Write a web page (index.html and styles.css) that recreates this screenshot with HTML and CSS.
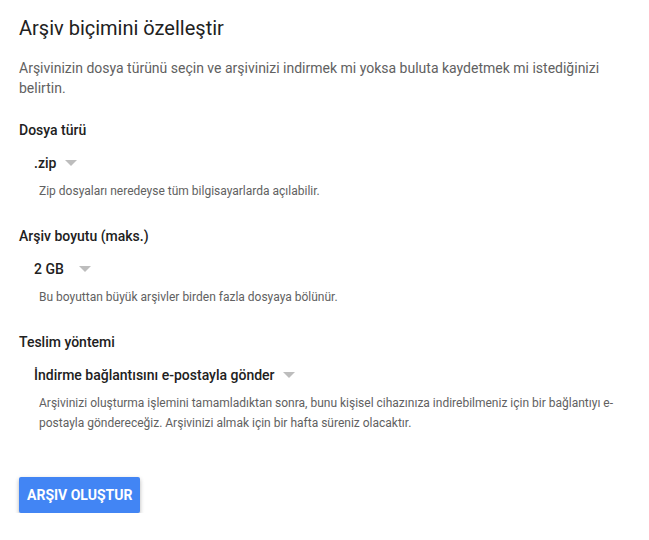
FILE: index.html
```html
<!DOCTYPE html>
<html>
  <head>
    <meta charset="UTF-8" />
    <title>Arşiv biçimi</title>
    <link rel="stylesheet" href="styles.css">
  </head>

  <body>
    <div class="page">
      <h1 class="title">Arşiv biçimini özelleştir</h1>
      <p class="intro">
        Arşivinizin dosya türünü seçin ve arşivinizi indirmek mi yoksa buluta kaydetmek mi istediğinizi belirtin.
      </p>

      <div class="option">
        <div class="option_label">Dosya türü</div>
        <div class="select">
          <span class="select_value">.zip</span>
          <span class="arrow arrow_zip"></span>
        </div>
        <div class="helper">Zip dosyaları neredeyse tüm bilgisayarlarda açılabilir.</div>
      </div>

      <div class="option">
        <div class="option_label">Arşiv boyutu (maks.)</div>
        <div class="select">
          <span class="select_value">2 GB</span>
          <span class="arrow arrow_size"></span>
        </div>
        <div class="helper">Bu boyuttan büyük arşivler birden fazla dosyaya bölünür.</div>
      </div>

      <div class="option">
        <div class="option_label">Teslim yöntemi</div>
        <div class="select">
          <span class="select_value">İndirme bağlantısını e-postayla gönder</span>
          <span class="arrow"></span>
        </div>
        <div class="helper">
          Arşivinizi oluşturma işlemini tamamladıktan sonra, bunu kişisel cihazınıza indirebilmeniz için bir bağlantıyı e-postayla göndereceğiz. Arşivinizi almak için bir hafta süreniz olacaktır.
        </div>
      </div>

      <button class="create_button">Arşiv oluştur</button>
    </div>
  </body>
</html>
```

FILE: styles.css
```css
body {
  margin: 0;
  background-color: #fff;
  font-family: Roboto, "Noto Sans", Arial, sans-serif;
  color: #212121;
}

.page {
  padding: 14px 19px 0 19px;
}

.title {
  margin: 0;
  font-size: 20px;
  font-weight: 400;
  line-height: 28px;
  color: #212121;
}

.intro {
  margin: 16px 0 0 0;
  font-size: 14px;
  line-height: 20px;
  color: #616161;
  max-width: 610px;
}

/* Option blocks */
.option {
  margin-top: 22px;
}
.option + .option {
  margin-top: 25px;
}
.option_label {
  font-size: 14px;
  font-weight: 500;
  line-height: 20px;
  color: #212121;
}
.select {
  display: flex;
  align-items: center;
  margin: 13px 0 0 15px;
  height: 20px;
}
.select_value {
  font-size: 14px;
  font-weight: 500;
  line-height: 20px;
  color: #212121;
}
.arrow {
  width: 0;
  height: 0;
  margin-left: 8px;
  border-left: 6px solid transparent;
  border-right: 6px solid transparent;
  border-top: 6px solid #bdbdbd;
}
.arrow_zip {
  margin-left: 9px;
}
.arrow_size {
  margin-left: 15px;
}
.helper {
  margin: 8px 0 0 20px;
  font-size: 12px;
  line-height: 20px;
  color: #616161;
  max-width: 590px;
}

/* Button */
.create_button {
  margin-top: 44px;
  height: 36px;
  padding: 0 8px;
  border: none;
  border-radius: 2px;
  background-color: #4285f4;
  color: #fff;
  font-family: Roboto, "Noto Sans", Arial, sans-serif;
  font-size: 14px;
  font-weight: 700;
  text-transform: uppercase;
  box-shadow: 0 2px 4px rgba(0, 0, 0, 0.3);
}
```
